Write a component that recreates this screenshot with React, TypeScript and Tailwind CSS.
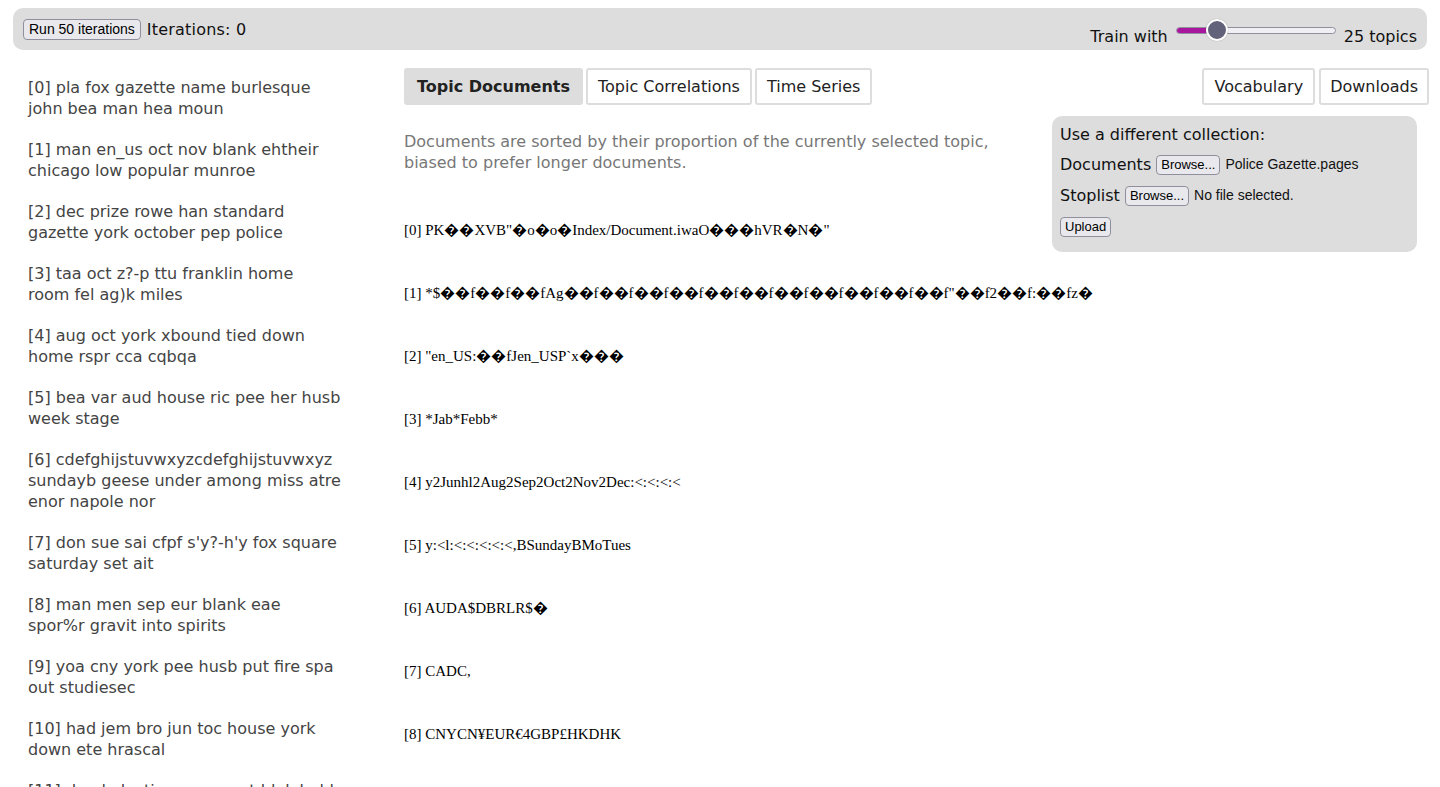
import React from "react";

const topics: string[][] = [
  ["[0] pla fox gazette name burlesque", "john bea man hea moun"],
  ["[1] man en_us oct nov blank ehtheir", "chicago low popular munroe"],
  ["[2] dec prize rowe han standard", "gazette york october pep police"],
  ["[3] taa oct z?-p ttu franklin home", "room fel ag)k miles"],
  ["[4] aug oct york xbound tied down", "home rspr cca cqbqa"],
  ["[5] bea var aud house ric pee her husb", "week stage"],
  ["[6] cdefghijstuvwxyzcdefghijstuvwxyz", "sundayb geese under among miss atre", "enor napole nor"],
  ["[7] don sue sai cfpf s'y?-h'y fox square", "saturday set ait"],
  ["[8] man men sep eur blank eae", "spor%r gravit into spirits"],
  ["[9] yoa cny york pee husb put fire spa", "out studiesec"],
  ["[10] had jem bro jun toc house york", "down ete hrascal"],
  ["[11] dead election money at blak hold", "street bea"],
];

const R = "\uFFFD";
const docs: string[] = [
  `[0] PK${R}${R}XVB"${R}o${R}o${R}Index/Document.iwaO${R}${R}${R}hVR${R}N${R}"`,
  `[1] *$${R}${R}f${R}${R}f${R}${R}fAg${R}${R}f${R}${R}f${R}${R}f${R}${R}f${R}${R}f${R}${R}f${R}${R}f${R}${R}f${R}${R}f${R}${R}f${R}${R}f"${R}${R}f2${R}${R}f:${R}${R}fz${R}`,
  `[2] "en_US:${R}${R}fJen_USP\`x${R}${R}${R}`,
  `[3] *Jab*Febb*`,
  `[4] y2Junhl2Aug2Sep2Oct2Nov2Dec:<:<:<:<`,
  `[5] y:<l:<:<:<:<:<,BSundayBMoTues`,
  `[6] AUDA$DBRLR$${R}`,
  `[7] CADC,`,
  `[8] CNYCN¥EUR€4GBP£HKDHK`,
];

function NativeButton({ children }: { children: React.ReactNode }) {
  return (
    <button className="h-[20px] px-[4px] rounded-[4px] border border-[#8f8f9d] bg-[#e9e9ed] text-[13px] leading-[18px] text-black font-['Liberation_Sans',sans-serif]">
      {children}
    </button>
  );
}

export default function App() {
  return (
    <div className="min-h-screen bg-white font-['DejaVu_Sans',sans-serif] text-[16px]">
      {/* Top bar */}
      <div className="mx-[13px] mt-[8px] h-[42px] rounded-[10px] bg-[#dddddd] flex justify-between px-[10px]">
        <div className="flex items-center self-start pt-[11px] gap-[6px]">
          <button className="h-[21px] px-[5px] rounded-[4px] border border-[#8f8f9d] bg-[#e9e9ed] text-[14px] leading-[19px] text-black font-['Liberation_Sans',sans-serif]">
            Run 50 iterations
          </button>
          <span className="leading-[21px] text-[#111] tracking-[0.2px]">Iterations: 0</span>
        </div>
        <div className="flex items-end self-end pb-[3px]">
          <span className="leading-[21px] text-[#111]">Train with</span>
          <div className="relative mx-[8px] mb-[6px] w-[160px] h-[22px] flex items-center">
            <div className="w-full h-[7px] rounded-full border border-[#8f8f9d] bg-[#f0f0f4] overflow-hidden">
              <div className="h-full w-[41px] bg-[#a8169e]" />
            </div>
            <div className="absolute left-[30px] top-0 w-[22px] h-[22px] rounded-full bg-[#62627a] border-2 border-white shadow-[0_0_1px_rgba(0,0,0,0.4)]" />
          </div>
          <span className="leading-[21px] text-[#111]">25 topics</span>
        </div>
      </div>

      <div className="flex">
        {/* Sidebar */}
        <div className="ml-[28px] w-[330px] shrink-0 pt-[27px] flex flex-col gap-[20px] text-[#444] leading-[21px]">
          {topics.map((t) => (
            <div key={t[0]}>
              {t.map((line) => (
                <div key={line} className="whitespace-nowrap">{line}</div>
              ))}
            </div>
          ))}
        </div>

        {/* Main */}
        <div className="ml-[46px] mr-[11px] flex-1 pt-[18px]">
          <div className="flex justify-between">
            <div className="flex gap-[3px]">
              <div className="h-[37px] px-[11px] flex items-center rounded-[3px] bg-[#dddddd] border-2 border-[#dddddd] font-bold text-[#222]">
                Topic Documents
              </div>
              <div className="h-[37px] px-[10px] flex items-center rounded-[3px] bg-white border-2 border-[#dddddd] text-[#222]">
                Topic Correlations
              </div>
              <div className="h-[37px] px-[10px] flex items-center rounded-[3px] bg-white border-2 border-[#dddddd] text-[#222]">
                Time Series
              </div>
            </div>
            <div className="flex gap-[4px]">
              <div className="h-[37px] px-[10px] flex items-center rounded-[3px] bg-white border-2 border-[#dddddd] text-[#222]">
                Vocabulary
              </div>
              <div className="h-[37px] px-[9px] flex items-center rounded-[3px] bg-white border-2 border-[#dddddd] text-[#222]">
                Downloads
              </div>
            </div>
          </div>

          <div className="pt-[11px]">
            <div className="float-right mr-[12px] w-[365px] rounded-[10px] bg-[#dddddd] px-[8px] pt-[8px] pb-[10px] text-[#111]">
              <div className="leading-[21px] mb-[4px]">Use a different collection:</div>
              <div className="h-[31px] flex items-center gap-[5px]">
                <span>Documents</span>
                <NativeButton>Browse...</NativeButton>
                <span className="text-[14px] font-['Liberation_Sans',sans-serif]">Police Gazette.pages</span>
              </div>
              <div className="h-[31px] flex items-center gap-[5px]">
                <span>Stoplist</span>
                <NativeButton>Browse...</NativeButton>
                <span className="text-[14px] font-['Liberation_Sans',sans-serif]">No file selected.</span>
              </div>
              <div className="h-[31px] flex items-center">
                <NativeButton>Upload</NativeButton>
              </div>
            </div>
            <p className="mt-[15px] w-[600px] leading-[21px] text-[#777]">
              Documents are sorted by their proportion of the currently selected topic, biased to prefer longer documents.
            </p>
            <div className="mt-[26px] font-['Liberation_Serif',serif] text-[15px] text-black">
              {docs.map((d) => (
                <div key={d} className="py-[21px] leading-[21px] whitespace-nowrap">
                  {d}
                </div>
              ))}
            </div>
          </div>
        </div>
      </div>
    </div>
  );
}
